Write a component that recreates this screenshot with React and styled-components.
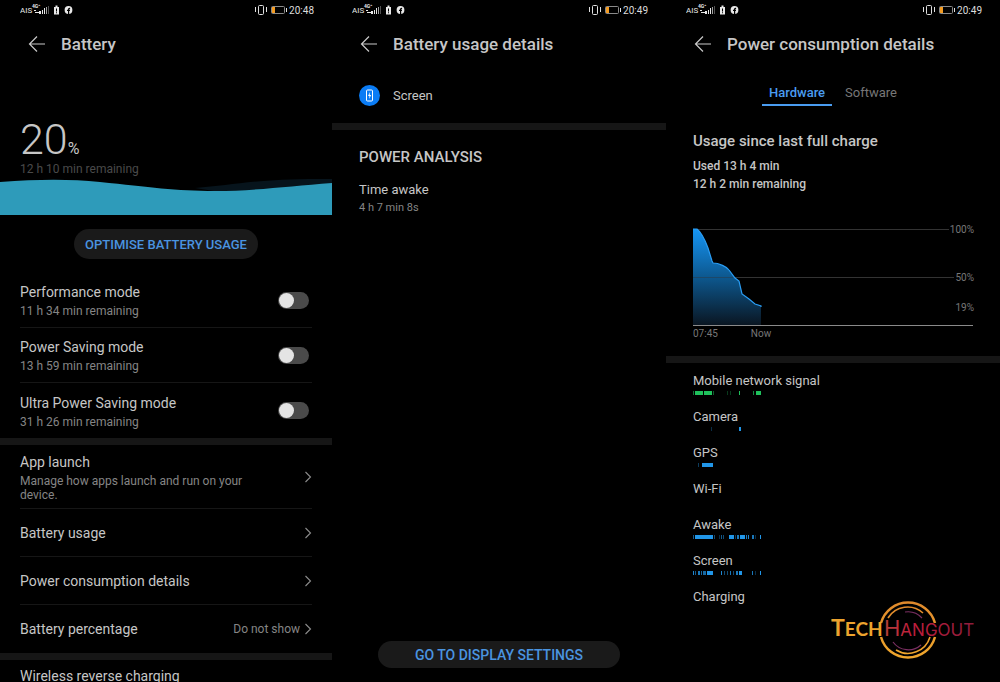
import React,{useState} from 'react';
import styled,{createGlobalStyle} from 'styled-components';

const modes = [
    {id: 'performance', name: 'Performance mode', remaining: '11 h 34 min remaining'},
    {id: 'saving', name: 'Power Saving mode', remaining: '13 h 59 min remaining'},
    {id: 'ultra', name: 'Ultra Power Saving mode', remaining: '31 h 26 min remaining'},
];

const green = '#1fc15c';
const blue = '#2196e8';

// each segment is [start, width, opacity]
const hardware = [
    {name: 'Mobile network signal', color: green, segments: [[0,1,.6],[2,8,1],[11,8,1],[20,1,.5],[34,1,.3],[37,1,.3],[46,1,1],[60,1,.7],[63,5,1]]},
    {name: 'Camera', color: blue, segments: [[18,1,.3],[46,2,1]]},
    {name: 'GPS', color: blue, segments: [[5,1,.4],[9,11,1]]},
    {name: 'Wi-Fi', color: blue, segments: []},
    {name: 'Awake', color: blue, segments: [[0,1,.6],[2,18,1],[21,1,.5],[26,1,.3],[28,1,.6],[30,1,.5],[36,5,1],[42,1,.4],[44,2,.8],[47,5,1],[53,1,.8],[55,1,.9],[59,2,.8],[62,1,.3],[67,1,1]]},
    {name: 'Screen', color: blue, segments: [[0,1,.9],[2,1,.6],[5,2,.8],[8,1,.7],[10,3,.7],[14,6,1],[28,1,.9],[31,1,.5],[34,1,.5],[37,1,.8],[40,1,.5],[43,2,.8],[46,3,1],[59,1,.8],[62,1,.3],[67,1,1]]},
    {name: 'Charging', color: blue, segments: []},
];

const StatusBar = ({time}) => (
    <Status>
        <svg width="56" height="14" viewBox="0 0 56 14" fill="#e8e8e8">
            <text x="0" y="10" fontSize="8">AIS</text>
            <text x="12" y="5" fontSize="5" fontWeight="700">4G⁺</text>
            <path d="M14 7h2v1h-2zM15 9h4v1h-4zM19 8h2v3h-2zM22 7h1v4h-1zM24 5h1v6h-1z" />
            <path d="M26 4h1v7h-1z" opacity=".7" />
            <path d="M28 3h1v8h-1z" opacity=".35" />
            <path d="M34 4h1.500v-1.500h2v1.500h1.500v7.500h-5z" />
            <path d="M36 5.500h1v3h-1zM36 9.200h1v1h-1z" fill="#000" />
            <circle cx="48.500" cy="7" r="3.900" />
            <path d="M48 11v-3h-1v-1.200h1c-.1-1.500.6-2.200 2.100-2v1.100c-.8 0-.9.200-.9.900h.9l-.2 1.200h-.7v3z" fill="#000" />
        </svg>
        <StatusSide>
            <svg width="33" height="12" viewBox="0 0 33 12" fill="none" stroke="#e0e0e0">
                <path d="M.5 3v5M11.500 3v5" />
                <rect x="3.500" y="1.500" width="5" height="9" rx="1" />
                <rect x="16.500" y="2.500" width="13" height="7" rx="1" stroke="#8a8a8a" />
                <path d="M31.500 4v4" />
                <path d="M17 3h3v6h-3z" fill="#f39b22" stroke="none" />
            </svg>
            <span>{time}</span>
        </StatusSide>
    </Status>
);

const Header = ({title}) => (
    <Top>
        <BackButton type="button" aria-label="Back">
            <svg width="18" height="18" viewBox="0 0 18 18" fill="none" stroke="#c9c9c9" strokeWidth="1.200">
                <path d="M17 9H1.500M9 1.500L1.500 9L9 16.500" />
            </svg>
        </BackButton>
        <Title>{title}</Title>
    </Top>
);

const Chevron = () => (
    <svg width="8" height="12" viewBox="0 0 8 12" fill="none" stroke="#8c8c8c" strokeWidth="1.100">
        <path d="M1.500 1L6.500 6L1.500 11" />
    </svg>
);

const ModeRow = ({id, name, remaining}) => {
    const[active, changeActive]=useState(false);

    return (
        <Row $height="55px">
            <ModeLabel htmlFor={id}>
                <RowName>{name}</RowName>
                <RowHint>{remaining}</RowHint>
            </ModeLabel>
            <Toggle
                type="checkbox"
                id={id}
                checked={active}
                onChange={()=> changeActive(!active)}
            />
        </Row>
    );
}

const LinkRow = ({name, hint, value, height, plain}) => (
    <Row as="button" type="button" $height={height}>
        <RowText>
            <RowName>{name}</RowName>
            {hint && <RowHint $tight>{hint}</RowHint>}
        </RowText>
        {!plain &&
            <RowEnd>
                {value && <span>{value}</span>}
                <Chevron />
            </RowEnd>
        }
    </Row>
);

const BatteryScreen = () => (
    <Screen>
        <StatusBar time="20:48" />
        <Header title="Battery" />
        <Charge>
            <Level>20<small>%</small></Level>
            <ChargeHint>12 h 10 min remaining</ChargeHint>
        </Charge>
        <Wave viewBox="0 0 332 38" preserveAspectRatio="none">
            <path d="M195 11C235 8 260 1 332 2V11L220 15z" fill="#07141c" />
            <path d="M0 5C40 2 70 2 100 5C150 10 175 14 215 14C255 14 290 9 332 6V38H0z" fill="#2e9bba" />
        </Wave>
        <ButtonArea>
            <Pill type="button" $width="184px" $height="30px" $size="13px">OPTIMISE BATTERY USAGE</Pill>
        </ButtonArea>
        <List>
            {modes.map((mode)=> <ModeRow key={mode.id} {...mode} />)}
        </List>
        <Band />
        <List>
            <LinkRow name="App launch" hint="Manage how apps launch and run on your device." height="64px" />
            <LinkRow name="Battery usage" height="48px" />
            <LinkRow name="Power consumption details" height="48px" />
            <LinkRow name="Battery percentage" value="Do not show" height="48px" />
        </List>
        <Band />
        <List>
            <LinkRow name="Wireless reverse charging" height="32px" plain />
        </List>
    </Screen>
);

const UsageScreen = () => (
    <Screen>
        <StatusBar time="20:49" />
        <Header title="Battery usage details" />
        <AppRow>
            <svg width="21" height="21" viewBox="0 0 21 21">
                <circle cx="10.500" cy="10.500" r="10.500" fill="#0a7cf5" />
                <rect x="7.500" y="5" width="6" height="11" rx="1" fill="none" stroke="#fff" />
                <path d="M11 7L9 11h1.500L10 14l2.200-4h-1.500z" fill="#fff" />
            </svg>
            <span>Screen</span>
        </AppRow>
        <Band />
        <Analysis>
            <h2>POWER ANALYSIS</h2>
            <dl>
                <dt>Time awake</dt>
                <dd>4 h 7 min 8s</dd>
            </dl>
        </Analysis>
        <Footer>
            <Pill type="button" $width="242px" $height="27px" $size="14px">GO TO DISPLAY SETTINGS</Pill>
        </Footer>
    </Screen>
);

const UsageChart = () => (
    <Chart viewBox="0 0 284 116">
        <defs>
            <linearGradient id="usage" x1="0" y1="0" x2="0" y2="1">
                <stop offset="0" stopColor="#1595f5" />
                <stop offset=".5" stopColor="#0d588f" />
                <stop offset="1" stopColor="#0a1622" />
            </linearGradient>
        </defs>
        <path d="M0 4.500H256M0 52.500H261" stroke="#333" />
        <path d="M0 4H4C8 7 12 15 15 23L19 36L20 38C26 38 34 42 36 45L42 53L46 56L49 69L56 74L62 79L68 81V100H0z" fill="url(#usage)" />
        <path d="M0 4H4C8 7 12 15 15 23L19 36L20 38C26 38 34 42 36 45L42 53L46 56L49 69L56 74L62 79L68 81V82" fill="none" stroke="#2a9df4" strokeWidth="1.200" />
        <path d="M0 52.500H40" stroke="#333" opacity=".4" />
        <path d="M0 100.500H280" stroke="#8a8a8a" />
        <g fill="#777" fontSize="10">
            <text x="281" y="8" textAnchor="end">100%</text>
            <text x="281" y="56" textAnchor="end">50%</text>
            <text x="281" y="86" textAnchor="end">19%</text>
            <text x="0" y="112">07:45</text>
            <text x="68" y="112" textAnchor="middle">Now</text>
        </g>
    </Chart>
);

const Logo = () => (
    <Watermark viewBox="0 0 148 62" role="img" aria-label="TechHangout">
        <defs>
            <linearGradient id="ring" x1="0" y1="0" x2="0" y2="1">
                <stop offset="0" stopColor="#e08a2c" />
                <stop offset="1" stopColor="#efa62c" />
            </linearGradient>
            <linearGradient id="word" x1="0" y1="0" x2="1" y2="0">
                <stop offset="0" stopColor="#b5413a" />
                <stop offset=".3" stopColor="#c01d3c" />
                <stop offset="1" stopColor="#8c1c3c" />
            </linearGradient>
        </defs>
        <g fill="none" stroke="url(#ring)">
            <path d="M50 23A28 28 0 0 1 104 23M50 37A28 28 0 0 0 104 37" strokeWidth="2.500" />
            <path d="M57 18A23 23 0 0 1 92 13M65 50A23 23 0 0 0 99 37" strokeWidth="1.600" />
        </g>
        <path d="M74 12A19 19 0 0 1 91 18M62 42A19 19 0 0 0 90 45" fill="none" stroke="#7b2f62" strokeWidth="1.200" />
        <text x="0" y="36" fontFamily="Lato, sans-serif" fontWeight="700" fontSize="23" fill="#eca32e">
            T<tspan fontSize="19">ECH</tspan>
        </text>
        <text x="53" y="36" fontFamily="Inter, sans-serif" fontWeight="400" fontSize="22" fill="url(#word)">
            H<tspan fontSize="17">ANGOUT</tspan>
        </text>
    </Watermark>
);

const ConsumptionScreen = () => {
    const[tab, changeTab]=useState('Hardware');

    return (
        <Screen>
            <StatusBar time="20:49" />
            <Header title="Power consumption details" />
            <Tabs role="tablist">
                {['Hardware', 'Software'].map((name)=>
                    <Tab
                        key={name}
                        type="button"
                        role="tab"
                        aria-selected={tab === name}
                        $active={tab === name}
                        onClick={()=> changeTab(name)}
                    >
                        {name}
                    </Tab>
                )}
            </Tabs>
            <Summary>
                <h2>Usage since last full charge</h2>
                <p>Used 13 h 4 min</p>
                <p>12 h 2 min remaining</p>
            </Summary>
            <UsageChart />
            <Band />
            <HardwareList>
                {hardware.map(({name, color, segments})=>
                    <li key={name}>
                        {name}
                        <svg width="70" height="4" viewBox="0 0 70 4" fill={color}>
                            {segments.map(([start, width, opacity])=>
                                <rect key={start} x={start} width={width} height="4" opacity={opacity} />
                            )}
                        </svg>
                    </li>
                )}
            </HardwareList>
            <Logo />
        </Screen>
    );
}

const App = () => {
    return (
        <>
            <GlobalStyle />
            <Page>
                <BatteryScreen />
                <UsageScreen />
                <ConsumptionScreen />
            </Page>
        </>
    );
}

const GlobalStyle = createGlobalStyle`
    * {
        box-sizing: border-box;
    }

    body {
        margin: 0;
        background: #000;
        color: #c6c6c6;
        font-family: Roboto, sans-serif;
        font-size: 14px;
    }

    h1, h2, p, ul, dl, dd {
        margin: 0;
        padding: 0;
    }

    button {
        font-family: inherit;
        color: inherit;
        background: none;
        border: none;
        padding: 0;
        cursor: pointer;
    }

    svg {
        display: block;
        flex-shrink: 0;
    }
`;

const Page = styled.main`
    display: grid;
    grid-template-columns: 332fr 334fr 334fr;
    height: 100vh;
    overflow: hidden;
`;

const Screen = styled.section`
    position: relative;
    display: flex;
    flex-direction: column;
    min-width: 0;
    overflow: hidden;
`;

const Status = styled.div`
    display: flex;
    flex-shrink: 0;
    align-items: center;
    justify-content: space-between;
    height: 20px;
    padding: 0 18px 0 20px;
`;

const StatusSide = styled.div`
    display: flex;
    align-items: center;
    gap: 1px;
    font-size: 10px;
    color: #dcdcdc;
`;

const Top = styled.header`
    display: flex;
    flex-shrink: 0;
    align-items: center;
    gap: 15px;
    height: 48px;
    padding: 0 28px;
`;

const BackButton = styled.button`
    line-height: 0;
`;

const Title = styled.h1`
    font-size: 17px;
    font-weight: 500;
    line-height: 22px;
`;

const Charge = styled.div`
    padding: 50px 20px 0;
`;

const Level = styled.div`
    display: flex;
    align-items: baseline;
    height: 43px;
    font-size: 43px;
    font-weight: 300;
    line-height: 43px;

    small {
        font-size: 16px;
        font-weight: 400;
    }
`;

const ChargeHint = styled.p`
    font-size: 12px;
    line-height: 16px;
    color: #4a4a4a;
`;

const Wave = styled.svg`
    width: 100%;
    height: 38px;
`;

const ButtonArea = styled.div`
    display: flex;
    justify-content: center;
    padding: 14px 0;
`;

const Pill = styled.button`
    width: ${({$width})=> $width};
    height: ${({$height})=> $height};
    border-radius: 15px;
    background: #1a1a1a;
    color: #4a94e0;
    font-size: ${({$size})=> $size};
    font-weight: 500;
`;

const List = styled.div`
    padding: 0 20px;
`;

const Row = styled.div`
    display: flex;
    align-items: center;
    justify-content: space-between;
    width: 100%;
    height: ${({$height})=> $height};
    text-align: left;
    border-bottom: 1px solid #161616;

    &:last-child {
        border-bottom: none;
    }
`;

const ModeLabel = styled.label`
    padding-top: 2px;
`;

const RowText = styled.span`
    max-width: 240px;
`;

const RowName = styled.span`
    display: block;
    font-size: 14px;
    line-height: 20px;
`;

const RowHint = styled.span`
    display: block;
    padding-top: ${({$tight})=> $tight ? '2px' : '0'};
    font-size: 12px;
    line-height: ${({$tight})=> $tight ? '14px' : '18px'};
    color: #858585;
`;

const RowEnd = styled.span`
    display: flex;
    align-items: center;
    gap: 4px;
    font-size: 12px;
    color: #858585;
`;

const Toggle = styled.input`
    appearance: none;
    width: 31px;
    height: 17px;
    margin: 0 3px 0 0;
    padding: 1px;
    border-radius: 9px;
    background: #4a4a4a;
    cursor: pointer;

    &::before {
        content: '';
        display: block;
        width: 15px;
        height: 15px;
        border-radius: 50%;
        background: #e4e4e4;
    }

    &:checked {
        background: #2e86e0;
    }

    &:checked::before {
        margin-left: auto;
    }
`;

const Band = styled.div`
    flex-shrink: 0;
    height: 7px;
    background: #161616;
`;

const AppRow = styled.div`
    display: flex;
    align-items: center;
    gap: 13px;
    height: 55px;
    padding: 0 27px;
    font-size: 13px;
`;

const Analysis = styled.div`
    padding: 17px 27px;

    h2 {
        font-size: 15px;
        font-weight: 500;
        line-height: 20px;
    }

    dt {
        margin-top: 14px;
        font-size: 13px;
        line-height: 18px;
    }

    dd {
        font-size: 11px;
        line-height: 18px;
        color: #858585;
    }
`;

const Footer = styled.footer`
    display: flex;
    justify-content: center;
    margin-top: auto;
    padding-bottom: 14px;
`;

const Tabs = styled.div`
    display: flex;
    justify-content: center;
    gap: 6px;
    height: 38px;
    padding-top: 12px;
`;

const Tab = styled.button`
    height: 26px;
    padding: 0 7px;
    font-size: 13px;
    font-weight: ${({$active})=> $active ? 500 : 400};
    color: ${({$active})=> $active ? '#4a9cf0' : '#777'};
    border-bottom: 2px solid ${({$active})=> $active ? '#4a9cf0' : 'transparent'};
`;

const Summary = styled.div`
    padding: 25px 27px 32px;

    h2 {
        margin-bottom: 6px;
        font-size: 15px;
        font-weight: 500;
        line-height: 20px;
    }

    p {
        font-size: 12px;
        font-weight: 500;
        line-height: 18px;
    }
`;

const Chart = styled.svg`
    width: 284px;
    height: 116px;
    margin: 0 0 15px 27px;
`;

const HardwareList = styled.ul`
    padding: 8px 27px;
    font-size: 13px;
    line-height: 20px;
    list-style: none;

    li {
        height: 36px;
    }
`;

const Watermark = styled.svg`
    position: absolute;
    right: 21px;
    bottom: 20px;
    width: 148px;
    height: 62px;
`;

export default App;
